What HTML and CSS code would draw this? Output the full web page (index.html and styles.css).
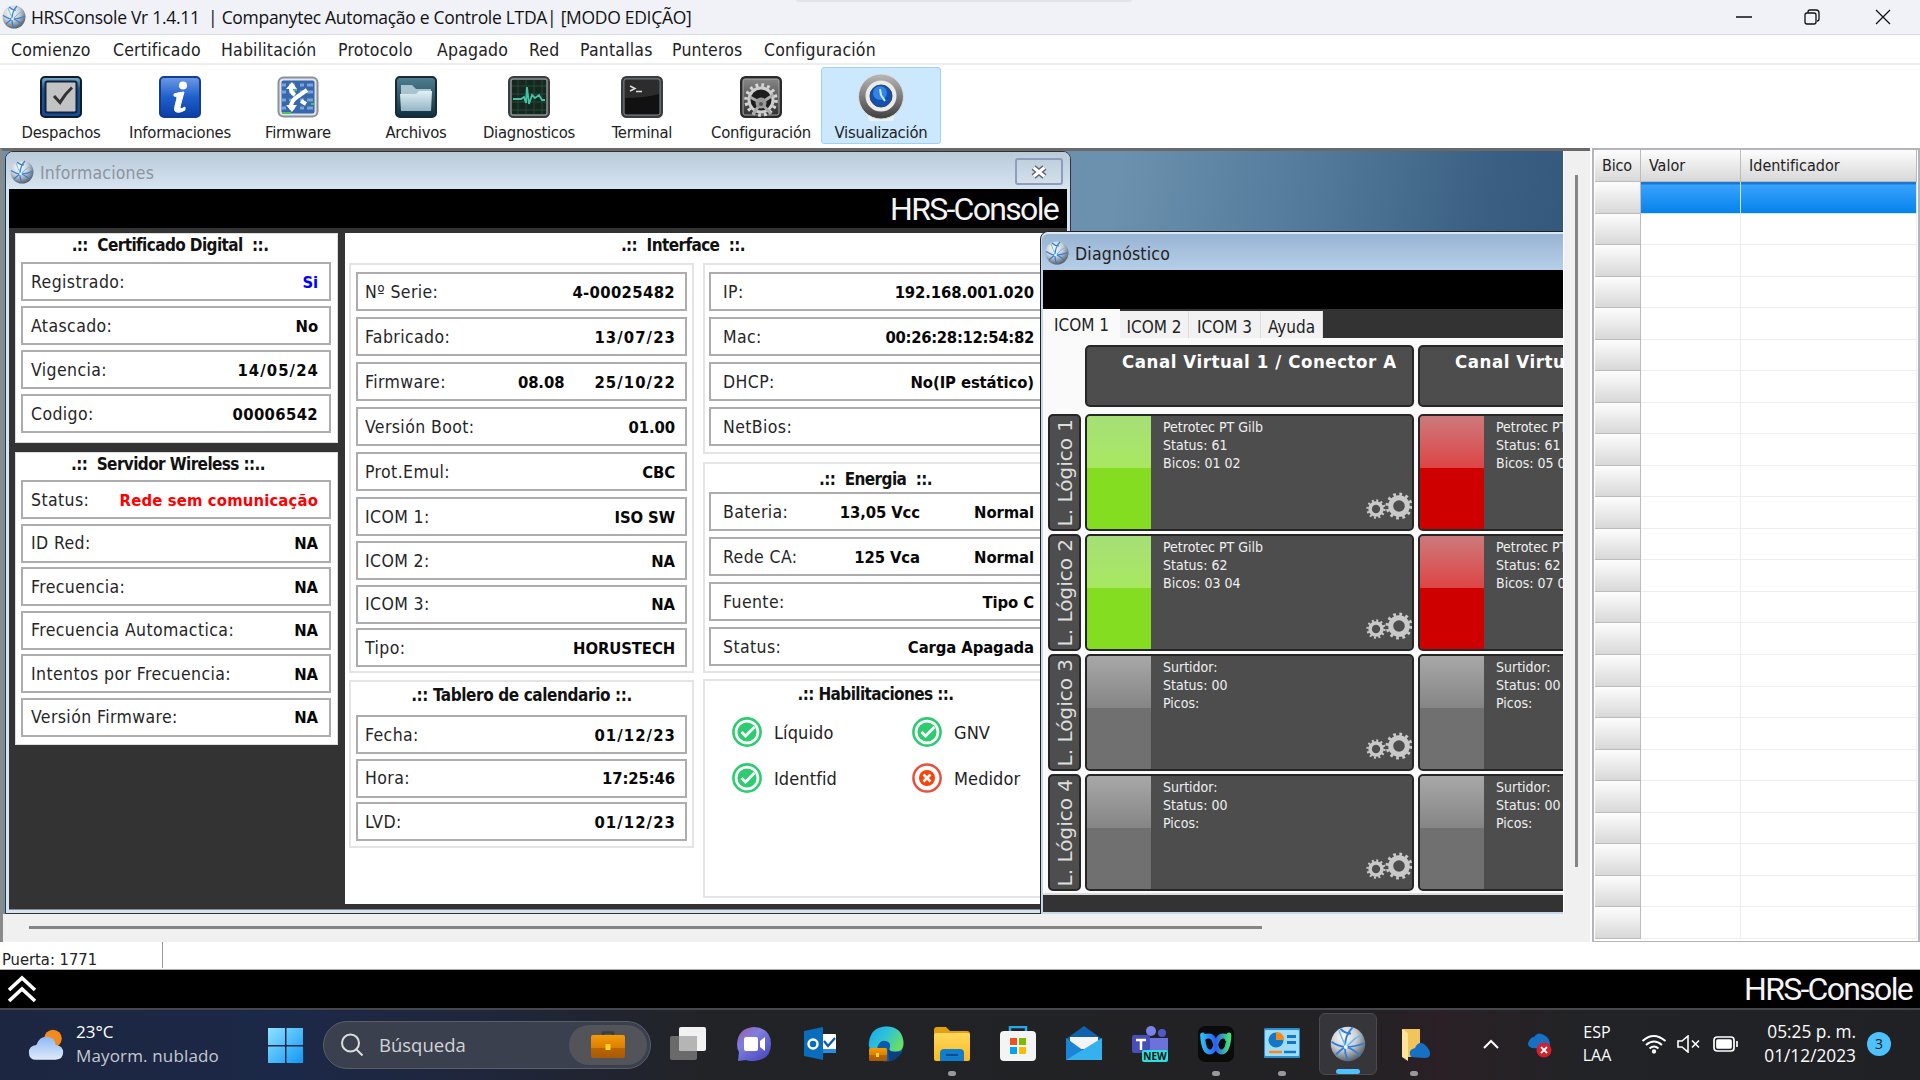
FILE: index.html
```html
<!DOCTYPE html>
<html lang="es">
<head>
<meta charset="utf-8">
<title>HRSConsole</title>
<link rel="stylesheet" href="styles.css">
</head>
<body>
<svg class="defs" width="0" height="0" aria-hidden="true">
  <defs>
    <radialGradient id="gGlobe" cx=".38" cy=".3" r=".75"><stop offset="0" stop-color="#fff"/><stop offset=".5" stop-color="#c9ced3"/><stop offset="1" stop-color="#4d555e"/></radialGradient>
    <linearGradient id="gInfo" x2="0" y2="1"><stop offset="0" stop-color="#6f9be6"/><stop offset=".5" stop-color="#1f5fcb"/><stop offset="1" stop-color="#0c3fa5"/></linearGradient>
    <linearGradient id="gDesk" x2="0" y2="1"><stop offset="0" stop-color="#79b3c9"/><stop offset=".3" stop-color="#1d5488"/><stop offset="1" stop-color="#164b9b"/></linearGradient>
    <linearGradient id="gFile" x2="0" y2="1"><stop offset="0" stop-color="#4f7f92"/><stop offset="1" stop-color="#0f2f3e"/></linearGradient>
    <linearGradient id="gFold" x2="0" y2="1"><stop offset="0" stop-color="#e3f1f6"/><stop offset="1" stop-color="#93b4c3"/></linearGradient>
    <linearGradient id="gGray" x2="0" y2="1"><stop offset="0" stop-color="#8a8a8a"/><stop offset="1" stop-color="#2d2d2d"/></linearGradient>
    <linearGradient id="gRing" x2="0" y2="1"><stop offset="0" stop-color="#b8b8b8"/><stop offset=".55" stop-color="#777"/><stop offset="1" stop-color="#3d3f3d"/></linearGradient>
    <linearGradient id="gWin" x2="1" y2="1"><stop offset="0" stop-color="#8fe2ff"/><stop offset="1" stop-color="#0f97f5"/></linearGradient>
    <linearGradient id="gCase" x2="0" y2="1"><stop offset="0" stop-color="#f79a06"/><stop offset=".55" stop-color="#d97f04"/><stop offset=".56" stop-color="#b96503"/><stop offset="1" stop-color="#a85a04"/></linearGradient>
    <linearGradient id="gChat" x2=".8" y2="1"><stop offset="0" stop-color="#9a5a9f"/><stop offset=".4" stop-color="#7f7fe0"/><stop offset="1" stop-color="#4a4ac0"/></linearGradient>
    <linearGradient id="gEdge" x2="1" y2=".6"><stop offset="0" stop-color="#1aa7e8"/><stop offset=".5" stop-color="#2fc3d8"/><stop offset="1" stop-color="#6ee05a"/></linearGradient>
    <linearGradient id="gYellow" x2="0" y2="1"><stop offset="0" stop-color="#ffd75e"/><stop offset="1" stop-color="#f9bb1e"/></linearGradient>
    <linearGradient id="gCloud" x2="0" y2="1"><stop offset="0" stop-color="#8db8f5"/><stop offset="1" stop-color="#dfeafa"/></linearGradient>
    <linearGradient id="gWebex" x2="1"><stop offset="0" stop-color="#2bb8f5"/><stop offset=".5" stop-color="#2f5cf5"/><stop offset="1" stop-color="#3fe07a"/></linearGradient>
  </defs>
  <symbol id="globe" viewBox="0 0 24 24">
    <circle cx="12" cy="12" r="11.500" fill="url(#gGlobe)"/>
    <path d="M1 10.500q5 3.500 10 3.500t12-2.500M15 1q-5 5-5 13t3 9M7 2q3 3 7 3M4 19q3-3 6-5M11 14q6 2 9 6" fill="none" stroke="#2f7fd8" stroke-width="1.200"/>
    <path d="M6 3q2 6 5 11M21 6q-5 2-10 8" fill="none" stroke="#6ab8f5" stroke-width="1"/>
    <circle cx="10.500" cy="14" r="1.300" fill="#e9f6ff"/>
  </symbol>
  <symbol id="cog" viewBox="-14 -14 28 28">
    <circle r="8.300" fill="none" stroke="#c9c9c9" stroke-width="5"/>
    <circle r="11.800" fill="none" stroke="#c9c9c9" stroke-width="3.400" stroke-dasharray="2.700 3.480"/>
  </symbol>
  <symbol id="ok" viewBox="0 0 30 30">
    <circle cx="15" cy="15" r="13.600" fill="#fff" stroke="#2ecc71" stroke-width="2.600"/>
    <circle cx="15" cy="15" r="9.600" fill="#2ecc71"/>
    <path d="M9.500 15l4 4 9-9" fill="none" stroke="#fff" stroke-width="2.800"/>
  </symbol>
  <symbol id="bad" viewBox="0 0 30 30">
    <circle cx="15" cy="15" r="13.600" fill="#fff" stroke="#e8503e" stroke-width="2.500"/>
    <circle cx="15" cy="15" r="8" fill="#fb4208"/>
    <path d="M11.500 11.500l7 7m0-7l-7 7" stroke="#fff" stroke-width="2.600"/>
  </symbol>
</svg>

<header class="titlebar">
  <svg class="globe24"><use href="#globe"/></svg>
  <span class="app-title">HRSConsole Vr 1.4.11 &nbsp;| Companytec Automação e Controle LTDA| [MODO EDIÇÃO]</span>
  <div class="peek"></div>
  <svg class="winctl" width="170" height="24" viewBox="0 0 170 24" fill="none" stroke="#111" stroke-width="1.300">
    <path d="M8 12h16M148 5l14 14m0-14l-14 14"/>
    <rect x="77" y="8" width="11" height="11" rx="2"/><path d="M80 8v-1q0-2 2-2h6q3 0 3 3v6q0 2-2 2"/>
  </svg>
</header>

<nav class="menu"><span>Comienzo</span><span>Certificado</span><span>Habilitación</span><span>Protocolo</span><span>Apagado</span><span>Red</span><span>Pantallas</span><span>Punteros</span><span>Configuración</span></nav>

<div class="toolbar">
  <div class="tool"><svg viewBox="0 0 42 42"><rect x="1" y="1" width="40" height="40" rx="4" fill="url(#gDesk)" stroke="#0e1c2c" stroke-width="2"/><rect x="5.500" y="5.500" width="31" height="31" rx="2" fill="#c3c3c3" stroke="#12233f" stroke-width="2"/><path d="M14 20l6 6.500Q25 18 32 11.500" fill="none" stroke="#333" stroke-width="3"/></svg><span>Despachos</span></div>
  <div class="tool"><svg viewBox="0 0 42 42"><rect x="1" y="1" width="40" height="40" rx="4" fill="url(#gInfo)" stroke="#123f96" stroke-width="2"/><circle cx="24" cy="9.500" r="4" fill="#fff"/><path d="M15 18q6-2 10-2l-4 15q0 3 5 0v3q-7 4-10 1-1-1 0-5l2-8q0-2-3-2z" fill="#fff" stroke="#fff"/></svg><span>Informaciones</span></div>
  <div class="tool"><svg viewBox="0 0 42 42"><rect x="1.500" y="1.500" width="39" height="39" rx="5" fill="#e0e4ea" stroke="#8b9098" stroke-width="2"/><rect x="4.500" y="4.500" width="33" height="33" rx="2" fill="#3767ad"/><path d="M5 9h32M5 16h32M5 24h32M5 32h32" stroke="#7ca4d6" stroke-width="3" stroke-dasharray="4 3 6 5"/><path d="M5 37h9M34 28h4M17 14h3" stroke="#4ec55c" stroke-width="2"/><path d="M14 10q-1 6 4 9M24 25l5 3M30 14l-10 7q-6 4-6 10" fill="none" stroke="#fff" stroke-width="4"/><path d="M9 13l6-7 5 7zM9 29l6 7 5-7z" fill="#fff"/></svg><span>Firmware</span></div>
  <div class="tool"><svg viewBox="0 0 42 42"><rect x="1" y="1" width="40" height="40" rx="4" fill="url(#gFile)" stroke="#182b34" stroke-width="2"/><path d="M6 9h11l4 4h15v18h-30z" fill="#a9c3cf"/><path d="M5 18h16l3-3h13l-1 20h-30z" fill="url(#gFold)"/></svg><span>Archivos</span></div>
  <div class="tool"><svg viewBox="0 0 42 42"><rect x="1.500" y="1.500" width="39" height="39" rx="4" fill="#15281f" stroke="#3a3d3f" stroke-width="3"/><rect x="3" y="3" width="36" height="36" rx="2" fill="none" stroke="#8d9294" stroke-width="1.500"/><path d="M10 4v34M18 4v34M26 4v34M34 4v34M4 10h34M4 18h34M4 26h34M4 34h34" stroke="#2a4638"/><path d="M5 23h8l3-2 2 6 1-16 2 17 3-9 3 3 4-3 3 5h3" fill="none" stroke="#41c2a4" stroke-width="1.800"/></svg><span>Diagnosticos</span></div>
  <div class="tool"><svg viewBox="0 0 42 42"><rect x="1.500" y="1.500" width="39" height="39" rx="4" fill="#111" stroke="#3a3d40" stroke-width="3"/><rect x="3" y="3" width="36" height="36" rx="2" fill="none" stroke="#8a9096"/><path d="M4 4h34v14q-14 4-34 4z" fill="#2c2c2c"/><path d="M9 10l5 2.500-5 2.500M15 15.500h6" fill="none" stroke="#ddd" stroke-width="1.500"/></svg><span>Terminal</span></div>
  <div class="tool"><svg viewBox="0 0 42 42"><rect x="1.500" y="1.500" width="39" height="39" rx="4" fill="url(#gGray)" stroke="#2b2b2b" stroke-width="3"/><rect x="3" y="3" width="36" height="36" rx="2" fill="none" stroke="#aaa"/><circle cx="21" cy="24" r="12" fill="#1d1d1d" stroke="#cfcfcf" stroke-width="3"/><circle cx="21" cy="24" r="15" fill="none" stroke="#d6d6d6" stroke-width="3.500" stroke-dasharray="2.800 3.080"/><path d="M21 27L10 21M21 27l12-8M21 27l10 11M21 27l-8 11" stroke="#aaa" stroke-width="3"/><circle cx="21" cy="27" r="5.500" fill="#999"/><circle cx="21" cy="28" r="2" fill="#555"/></svg><span>Configuración</span></div>
  <div class="tool active"><svg class="big" viewBox="0 0 48 48"><path d="M10 40h28l-2 8h-24z" fill="#eef2f5"/><circle cx="24" cy="23.500" r="22.500" fill="url(#gRing)" stroke="#ddd"/><circle cx="24" cy="23" r="15.500" fill="#ebebeb"/><circle cx="24" cy="23" r="11" fill="#1450ad" stroke="#254468"/><circle cx="23" cy="20" r="7" fill="#3183e6"/><path d="M23 16l1 6 4 6" fill="none" stroke="#cce8ff" stroke-width="2"/></svg><span>Visualización</span></div>
</div>

<main class="work">
  <section class="mdi">
    <div class="canvas">
      <div class="win info">
        <div class="wtitle"><svg class="globe24"><use href="#globe"/></svg><span>Informaciones</span>
          <div class="closebtn"><svg width="20" height="16" viewBox="0 0 20 16"><path d="M4.500 3.500l11 9m0-9l-11 9" stroke="#5b6275" stroke-width="6"/><path d="M4.500 3.500l11 9m0-9l-11 9" stroke="#fff" stroke-width="3"/></svg></div>
        </div>
        <div class="band"><span class="logo">HRS-Console</span></div>
        <div class="wbody">
          <div class="left">
            <div class="card cert">
              <h3>.:: &nbsp;Certificado Digital &nbsp;::.</h3>
              <div class="rows g5">
                <div class="row"><span>Registrado:</span><b class="blue">Si</b></div>
                <div class="row"><span>Atascado:</span><b>No</b></div>
                <div class="row"><span>Vigencia:</span><b class="date">14/05/24</b></div>
                <div class="row"><span>Codigo:</span><b class="num">00006542</b></div>
              </div>
            </div>
            <div class="card serv">
              <h3>.:: &nbsp;Servidor Wireless ::..</h3>
              <div class="rows g45">
                <div class="row"><span>Status:</span><b class="red">Rede sem comunicação</b></div>
                <div class="row"><span>ID Red:</span><b>NA</b></div>
                <div class="row"><span>Frecuencia:</span><b>NA</b></div>
                <div class="row"><span>Frecuencia Automactica:</span><b>NA</b></div>
                <div class="row"><span>Intentos por Frecuencia:</span><b>NA</b></div>
                <div class="row"><span>Versión Firmware:</span><b>NA</b></div>
              </div>
            </div>
          </div>
          <div class="iface">
            <h3>.:: &nbsp;Interface &nbsp;::.</h3>
            <div class="cols">
              <div class="colA">
                <div class="sub s1">
                  <div class="rows g6">
                    <div class="row"><span>Nº Serie:</span><b class="num">4-00025482</b></div>
                    <div class="row"><span>Fabricado:</span><b class="date">13/07/23</b></div>
                    <div class="row"><span>Firmware:</span><b class="mid">08.08</b><b class="date">25/10/22</b></div>
                    <div class="row"><span>Versión Boot:</span><b>01.00</b></div>
                    <div class="row"><span>Prot.Emul:</span><b>CBC</b></div>
                    <div class="row"><span>ICOM 1:</span><b>ISO SW</b></div>
                  </div>
                  <div class="rows g45 more">
                    <div class="row"><span>ICOM 2:</span><b>NA</b></div>
                    <div class="row"><span>ICOM 3:</span><b>NA</b></div>
                    <div class="row"><span>Tipo:</span><b>HORUSTECH</b></div>
                  </div>
                </div>
                <div class="sub s2">
                  <h3>.:: Tablero de calendario ::.</h3>
                  <div class="rows g45">
                    <div class="row"><span>Fecha:</span><b class="date">01/12/23</b></div>
                    <div class="row"><span>Hora:</span><b>17:25:46</b></div>
                    <div class="row"><span>LVD:</span><b class="date">01/12/23</b></div>
                  </div>
                </div>
              </div>
              <div class="colB">
                <div class="sub s3">
                  <div class="rows g6">
                    <div class="row"><span>IP:</span><b>192.168.001.020</b></div>
                    <div class="row"><span>Mac:</span><b class="mac">00:26:28:12:54:82</b></div>
                    <div class="row"><span>DHCP:</span><b>No(IP estático)</b></div>
                    <div class="row"><span>NetBios:</span></div>
                  </div>
                </div>
                <div class="sub s4">
                  <h3>.:: &nbsp;Energia &nbsp;::.</h3>
                  <div class="rows g6">
                    <div class="row"><span>Bateria:</span><b class="volt">13,05 Vcc</b><b>Normal</b></div>
                    <div class="row"><span>Rede CA:</span><b class="volt">125 Vca</b><b>Normal</b></div>
                    <div class="row"><span>Fuente:</span><b>Tipo C</b></div>
                    <div class="row"><span>Status:</span><b>Carga Apagada</b></div>
                  </div>
                </div>
                <div class="sub s5">
                  <h3>.:: Habilitaciones ::.</h3>
                  <div class="flags">
                    <div><svg><use href="#ok"/></svg>Líquido</div><div><svg><use href="#ok"/></svg>GNV</div>
                    <div><svg><use href="#ok"/></svg>Identfid</div><div><svg><use href="#bad"/></svg>Medidor</div>
                  </div>
                </div>
              </div>
            </div>
          </div>
        </div>
      </div>

      <div class="win diag">
        <div class="wtitle"><svg class="globe24"><use href="#globe"/></svg><span>Diagnóstico</span></div>
        <div class="band"></div>
        <div class="tabs"><span class="on">ICOM 1</span><span>ICOM 2</span><span>ICOM 3</span><span>Ayuda</span></div>
        <div class="board">
          <div></div><div class="chan">Canal Virtual 1 / Conector A</div><div class="chan">Canal Virtual 2 / Conector B</div>
          <div class="log"><span>L. Lógico 1</span></div>
          <div class="cell green"><i></i><p>Petrotec PT Gilb<br>Status: 61<br>Bicos: 01 02</p><svg class="c1"><use href="#cog"/></svg><svg class="c2"><use href="#cog"/></svg></div>
          <div class="cell redc"><i></i><p>Petrotec PT Gilb<br>Status: 61<br>Bicos: 05 06</p></div>
          <div class="log"><span>L. Lógico 2</span></div>
          <div class="cell green"><i></i><p>Petrotec PT Gilb<br>Status: 62<br>Bicos: 03 04</p><svg class="c1"><use href="#cog"/></svg><svg class="c2"><use href="#cog"/></svg></div>
          <div class="cell redc"><i></i><p>Petrotec PT Gilb<br>Status: 62<br>Bicos: 07 08</p></div>
          <div class="log"><span>L. Lógico 3</span></div>
          <div class="cell"><i></i><p>Surtidor:<br>Status: 00<br>Picos:</p><svg class="c1"><use href="#cog"/></svg><svg class="c2"><use href="#cog"/></svg></div>
          <div class="cell"><i></i><p>Surtidor:<br>Status: 00<br>Picos:</p></div>
          <div class="log"><span>L. Lógico 4</span></div>
          <div class="cell"><i></i><p>Surtidor:<br>Status: 00<br>Picos:</p><svg class="c1"><use href="#cog"/></svg><svg class="c2"><use href="#cog"/></svg></div>
          <div class="cell"><i></i><p>Surtidor:<br>Status: 00<br>Picos:</p></div>
        </div>
      </div>
    </div>
    <div class="vscroll"><div></div></div>
    <div class="hscroll"><div></div></div>
  </section>

  <aside class="grid">
    <div class="gr head"><span>Bico</span><span>Valor</span><span>Identificador</span></div>
    <div class="gr sel"><i></i><i></i><i></i></div>
    <div class="gr"><i></i><i></i><i></i></div><div class="gr"><i></i><i></i><i></i></div><div class="gr"><i></i><i></i><i></i></div><div class="gr"><i></i><i></i><i></i></div>
    <div class="gr"><i></i><i></i><i></i></div><div class="gr"><i></i><i></i><i></i></div><div class="gr"><i></i><i></i><i></i></div><div class="gr"><i></i><i></i><i></i></div>
    <div class="gr"><i></i><i></i><i></i></div><div class="gr"><i></i><i></i><i></i></div><div class="gr"><i></i><i></i><i></i></div><div class="gr"><i></i><i></i><i></i></div>
    <div class="gr"><i></i><i></i><i></i></div><div class="gr"><i></i><i></i><i></i></div><div class="gr"><i></i><i></i><i></i></div><div class="gr"><i></i><i></i><i></i></div>
    <div class="gr"><i></i><i></i><i></i></div><div class="gr"><i></i><i></i><i></i></div><div class="gr"><i></i><i></i><i></i></div><div class="gr"><i></i><i></i><i></i></div>
    <div class="gr"><i></i><i></i><i></i></div><div class="gr"><i></i><i></i><i></i></div><div class="gr"><i></i><i></i><i></i></div>
  </aside>
</main>

<div class="status"><span>Puerta: 1771</span></div>
<div class="footer"><svg width="30" height="28" viewBox="0 0 30 28" fill="none" stroke="#fff" stroke-width="3.600"><path d="M2 15L15 3l13 12M2 26L15 14l13 12"/></svg><span class="logo">HRS-Console</span></div>

<div class="taskbar">
  <svg class="weather" viewBox="0 0 40 34"><circle cx="27" cy="10" r="9.500" fill="#f38a1c"/><path d="M9 33q-8 0-8-8 0-7 8-8 3-9 11-9 9 0 10 9 8 1 8 8t-8 8z" fill="url(#gCloud)"/></svg>
  <div class="wtext"><span>23°C</span><span class="dim">Mayorm. nublado</span></div>
  <svg class="start" viewBox="0 0 35 35"><path d="M0 0h17v17h-17zM18.500 0h16.500v17h-16.500zM0 18.500h17v16.500h-17zM18.500 18.500h16.500v16.500h-16.500z" fill="url(#gWin)"/></svg>
  <div class="search">
    <svg width="26" height="26" viewBox="0 0 26 26" fill="none" stroke="#ddd" stroke-width="2"><circle cx="11.500" cy="11" r="8.500"/><path d="M17.500 17.500l6 6"/></svg>
    <span>Búsqueda</span>
    <div class="pill"><svg width="34" height="28" viewBox="0 0 34 28"><path d="M12 5v-3.500h10v3.500" fill="none" stroke="#3b3b3b" stroke-width="2.500"/><rect y="4" width="34" height="23" rx="2" fill="url(#gCase)"/><rect x="14.500" y="13" width="5" height="6" fill="#ffd51a"/></svg></div>
  </div>
  <div class="apps">
    <div><svg viewBox="0 0 36 36"><rect x="0" y="10" width="27" height="24" rx="2" fill="#6a6a6a"/><rect x="9" y="1" width="27" height="24" rx="2" fill="#f2f2f2"/><path d="M9 10h18v15h-16q-2 0-2-2z" fill="#b5b5b5"/></svg></div>
    <div><svg viewBox="0 0 36 36"><path d="M18 1q17 1 17 17t-17 17q-6 0-8-1l-8 1 1-9q-2-3-2-8 1-16 17-17z" fill="url(#gChat)"/><rect x="8" y="11" width="14" height="14" rx="2" fill="#fff"/><path d="M24 15l5-4v14l-5-4z" fill="#fff"/></svg></div>
    <div><svg viewBox="0 0 36 36"><rect x="16" y="8" width="18" height="19" rx="1" fill="#fff"/><path d="M16 18l18-9v18h-18z" fill="#2a8ddc"/><path d="M20 9h14v14h-14z" fill="#fff"/><path d="M22 15l4 5 7-8" fill="none" stroke="#0b5ca8" stroke-width="2.200"/><path d="M2 5l19-4v33l-19-4z" fill="#0a6cbd"/><circle cx="11" cy="18" r="4.500" fill="none" stroke="#fff" stroke-width="2.500"/></svg></div>
    <div><svg viewBox="0 0 36 36"><circle cx="18" cy="18" r="17.500" fill="#0c5aa8"/><path d="M1 20q0-19 17-19.500 17 0 17.500 17 0 8-8 8-7 0-6-3 2-5-2-7-7-3-10 5-1 4 1 8-7-1-9.500-8.500z" fill="url(#gEdge)"/><path d="M20 22q1 5 9 4l5 0q-6 9-13 9z" fill="#0b3f7e"/><rect x="1" y="22" width="18" height="13" rx="1.500" fill="url(#gCase)"/><rect x="8" y="27" width="3" height="4" fill="#ffd51a"/></svg></div>
    <div class="run"><svg viewBox="0 0 36 36"><path d="M0 4q0-3 3-3h9l4 4h17q3 0 3 3v4h-36z" fill="#e0a010"/><rect y="7" width="36" height="28" rx="2" fill="url(#gYellow)"/><path d="M6 35v-8q0-4 4-4h16q4 0 4 4v8z" fill="#127dcc"/><path d="M12 29h12" stroke="#0a4c8c" stroke-width="2"/></svg></div>
    <div><svg viewBox="0 0 36 36"><path d="M10 7v-6h16v6" fill="none" stroke="#24a8e6" stroke-width="2.500"/><rect y="5" width="36" height="30" rx="4" fill="#f4f4f4"/><path d="M10 12h7v7h-7z" fill="#f05022"/><path d="M19 12h7v7h-7z" fill="#7fba00"/><path d="M10 21h7v7h-7z" fill="#00a4ef"/><path d="M19 21h7v7h-7z" fill="#fb0"/></svg></div>
    <div><svg viewBox="0 0 36 36"><path d="M0 13l18-13 18 13v21h-36z" fill="#0e62ae"/><path d="M4 11h28v12h-28z" fill="#f4f4f4"/><path d="M0 12l18 13-18 9z" fill="#1b84d6"/><path d="M36 12v22h-36z" fill="#35b2ee"/></svg></div>
    <div><svg viewBox="0 0 36 36"><circle cx="19" cy="5" r="5" fill="#7b83eb"/><circle cx="30" cy="7" r="4" fill="#5059c9"/><path d="M12 12h24v12q0 5-6 5h-18z" fill="#6b72dc"/><rect x="0" y="9" width="18" height="18" rx="2" fill="#464eb8"/><path d="M4 14h10M9 14v10" stroke="#fff" stroke-width="2.500"/><rect x="10" y="24" width="26" height="12" rx="2" fill="#2de0e0"/><text x="23" y="33.800" class="newtag">NEW</text></svg></div>
    <div class="run"><svg viewBox="0 0 36 36"><rect width="36" height="36" rx="7" fill="#0b0b0b"/><path d="M4.500 9q1 17 7.500 17 4 0 6-8t7-8q4 0 4 3M31 9q-1 17-7.500 17-4 0-6-8t-6.500-8q-4 0-5 2" fill="none" stroke="url(#gWebex)" stroke-width="4.800" stroke-linecap="round"/></svg></div>
    <div class="run"><svg viewBox="0 0 36 36"><rect y="3" width="36" height="28" rx="2" fill="#9fdcf8" stroke="#2a8fd0" stroke-width="2"/><circle cx="12" cy="14" r="7.500" fill="#1278c6"/><path d="M12 14v-8q8 0 8 8z" fill="#f7891c"/><path d="M23 9h9v3h-9zM23 15h9v3h-9z" fill="#1278c6"/><path d="M5 26h13" stroke="#f7891c" stroke-width="2.500"/><path d="M20 26h12" stroke="#1278c6" stroke-width="2.500"/></svg></div>
    <div class="run cur"><svg><use href="#globe"/></svg></div>
    <div class="run"><svg viewBox="0 0 36 36"><path d="M6 3h18v28h-18z" fill="#f2c55c"/><path d="M6 3l6 4v28l-6-4z" fill="#ffe39a"/><path d="M15 31q-4-7 4-9 3-7 9-4 7 6 6 11-1 3-5 3z" fill="#1671c4"/></svg></div>
  </div>
  <div class="tray">
    <svg width="16" height="10" viewBox="0 0 16 10" fill="none" stroke="#fff" stroke-width="2"><path d="M1 9l7-7 7 7"/></svg>
    <svg width="26" height="28" viewBox="0 0 26 28"><path d="M5 18q-6-2-3-7 2-4 5-4 4-6 10-2 6 3 6 10l-4 4z" fill="#1671c4"/><circle cx="17" cy="20" r="7.500" fill="#d3202e"/><path d="M14 17l6 6m0-6l-6 6" stroke="#fff" stroke-width="1.800"/></svg>
    <div class="lang">ESP<br>LAA</div>
    <svg width="26" height="20" viewBox="0 0 26 20" fill="none" stroke="#fff" stroke-width="1.900"><path d="M1.500 7q11-10 23 0M5 11q8-7 16 0M8.500 14.500q4.500-4 9 0"/><circle cx="13" cy="17.500" r="1.200"/></svg>
    <svg width="24" height="18" viewBox="0 0 24 18" fill="none" stroke="#fff" stroke-width="1.600"><path d="M1 6h4l6-5v16l-6-5h-4zM15 5.500l7 7m0-7l-7 7"/></svg>
    <svg width="26" height="16" viewBox="0 0 26 16" fill="none" stroke="#fff" stroke-width="1.700"><rect x="1" y="1" width="20" height="14" rx="3"/><path d="M24 5v6"/><rect x="4" y="4" width="14" height="8" rx="1" fill="#fff"/></svg>
    <div class="clock">05:25 p. m.<br>01/12/2023</div>
    <div class="badge">3</div>
  </div>
</div>
</body>
</html>
```
FILE: styles.css
```css
* { box-sizing: border-box; }
html, body { margin: 0; height: 1080px; overflow: hidden; }
body {
  width: 1920px; display: flex; flex-direction: column; background: #fff; color: #222;
  font: 17px/20px "DejaVu Sans Condensed", "DejaVu Sans", sans-serif; font-stretch: condensed;
  white-space: nowrap;
}
.defs { position: absolute; }
svg { display: block; flex: none; }
h3 { margin: 0; font-size: 17px; line-height: 20px; text-align: center; color: #111; letter-spacing: -.6px; }
.globe24 { width: 24px; height: 24px; }

.titlebar { position: relative; height: 35px; background: #f0f2f7; display: flex; align-items: center; padding: 0 22px 0 2px; border-bottom: 1px solid #ddd; }
.app-title { flex: 1; margin-left: 5px; font: 17.500px/24px "Open Sans", "Noto Sans", sans-serif; font-stretch: normal; color: #111; letter-spacing: -.3px; }
.peek { position: absolute; left: 796px; top: 0; width: 336px; height: 2px; background: #e2e3e7; border-radius: 0 0 8px 8px; }

.menu { height: 30px; display: grid; grid-template-columns: 102px 108px 117px 99px 92px 51px 92px 92px 130px; padding: 2px 0 0 11px; align-items: center; border-bottom: 2px solid #eee; font-size: 17.500px; letter-spacing: .2px; }

.toolbar { height: 83px; display: grid; grid-template-columns: 120px 118px 118px 118px 108px 118px 120px 120px; padding: 2px 0 0 1px; font-size: 16.500px; letter-spacing: -.25px; }
.tool { height: 77px; display: flex; flex-direction: column; align-items: center; padding-top: 8px; border: 1px solid transparent; }
.tool svg { width: 42px; height: 42px; }
.tool span { margin-top: 5px; }
.tool.active { background: #cce8ff; border-color: #99d1ff; border-radius: 3px; }
.tool .big { width: 48px; height: 48px; margin: -3px 0; }

.work { height: 794px; display: flex; }
.mdi { width: 1590px; display: grid; grid-template: 763px 28px / 1561px 26px; border-top: 3px solid #696969; border-left: 3px solid #8a8a8a; background: #f0f0f0; }
.canvas { position: relative; overflow: hidden; background: linear-gradient(100deg, #6b91ae 66%, #52799a 78%, #3a5f82 88%, #2b5072); border-right: 1px solid #fff; }
.vscroll { padding: 24px 0 0 11px; }
.vscroll div { width: 3px; height: 692px; background: #858585; }
.hscroll { padding: 12px 0 0 26px; }
.hscroll div { width: 1233px; height: 3px; background: #858585; }

.win { position: absolute; border: 1px solid #333; border-radius: 8px 8px 0 0; }
.wtitle { display: flex; align-items: center; }
.info { left: 2px; top: 0; width: 1066px; height: 763px; background: #d6e3f0; padding: 0 3px; }
.info .wtitle { height: 37px; padding: 3px 7px 0 4px; background: linear-gradient(#b9cad9, #d7e4f1); color: #8d949b; margin: 0 -3px; border-radius: 7px 7px 0 0; }
.wtitle span { margin: 2px 0 0 6px; font-size: 17.500px; letter-spacing: .2px; }
.closebtn { margin-left: auto; width: 48px; height: 27px; border: 2px solid #8d9dbb; border-radius: 3px; display: grid; place-items: center; margin-top: -1px; }
.band { height: 39px; background: #000; display: flex; align-items: center; justify-content: flex-end; padding-right: 9px; }
.logo { font: 400 32px/38px Roboto, sans-serif; font-stretch: normal; color: #f4f4f4; letter-spacing: -1.700px; }
.wbody { background: #333; height: 682px; padding: 5px 0 5px 6px; display: flex; gap: 7px; border-bottom: 1px solid #889; }
.left { flex: none; width: 323px; display: flex; flex-direction: column; gap: 9px; }
.card { background: #fff; border: 1px solid #ddd; padding: 1px 6px 0 5px; }
.cert { height: 210px; }
.serv { height: 293px; }
.cert .rows { margin-top: 7px; }
.serv .rows { margin-top: 6px; }
.cert h3 { padding-right: 12px; } .serv h3 { padding-right: 16px; }
.rows { display: flex; flex-direction: column; }
.g5 { gap: 5px; } .g45 { gap: 4.500px; } .g6 { gap: 6px; }
.row { height: 39px; flex: none; background: #fff; border: 2px solid #adadad; display: flex; align-items: center; justify-content: space-between; padding: 0 11px 0 8px; }
.row span { color: #262626; font-size: 17.500px; letter-spacing: .4px; }
.row b { color: #080808; letter-spacing: -.1px; font-size: 16.500px; padding-top: 2px; }
.row b.blue { color: #00f; } .row b.red { color: #f00; letter-spacing: .15px; }
.row b.date { letter-spacing: 1.100px; margin-right: -1px; }
.row b.num { letter-spacing: .35px; }
.row b.mac { letter-spacing: -.3px; }
.row .mid { margin-left: auto; margin-right: 30px; }

.iface { flex: 1; min-width: 0; background: #fff; padding: 1px 4px 0; display: flex; flex-direction: column; }
.iface > h3 { margin: 1px 46px 8px 0; }
.cols { display: flex; gap: 9px; flex: 1; }
.colA { flex: none; width: 345px; }
.colB { flex: none; width: 361px; }
.sub { border: 2px solid #e4e4e4; padding: 0 5px; }
.s1 { height: 410px; padding-top: 7px; }
.s1 .more { margin-top: 5px; }
.s1 .row, .s2 .row { padding-left: 7px; padding-right: 10px; }
.s2 { height: 168px; margin-top: 7px; padding-top: 3px; }
.s2 h3 { letter-spacing: -.4px; }
.s2 .rows { margin-top: 10px; }
.s3 { height: 191px; padding-top: 7px; }
.s4 { height: 211px; margin-top: 8px; padding-top: 5px; }
.s4 .rows { margin-top: 3px; }
.colB .sub { padding-left: 4px; padding-right: 0; border-right: 0; }
.colB .row { padding-left: 12px; padding-right: 28px; }
.volt { margin-left: auto; width: 90px; text-align: right; }
.volt + b { width: 114px; text-align: right; }
.s4 h3, .s5 h3 { padding-right: 22px; }
.s5 { height: 219px; margin-top: 6px; padding-top: 3px; }
.flags { display: grid; grid-template: 46px 46px / 180px 160px; padding: 6px 0 0 23px; font-size: 18px; letter-spacing: .1px; }
.flags div { display: flex; align-items: center; gap: 12px; }
.flags svg { width: 30px; height: 30px; margin-top: -2px; }

.diag { left: 1037px; top: 80px; width: 620px; height: 700px; background: #c5d8ec; padding-left: 2px; border-color: #222; }
.diag .wtitle { height: 38px; padding: 1px 0 0 3px; background: linear-gradient(#98b4d3, #b6cee8); border-top: 2px solid #dbe7f3; margin-left: -1px; color: #222; border-radius: 7px 0 0 0; }
.tabs { height: 29px; background: #333; display: flex; align-items: flex-end; font-size: 17px; letter-spacing: 0; }
.tabs span { height: 27px; background: #f2f2f2; border-right: 1px solid #ddd; width: 72px; text-align: center; line-height: 33px; }
.tabs .on { width: 77px; height: 29px; background: #fafafa; line-height: 32px; border: 0; }
.tabs span:nth-child(2) { width: 69px; }
.tabs span:last-child { width: 62px; }
.board { height: 557px; background: #fafafa; display: grid; grid-template: 66px repeat(4, 117px) / 33px 329px 330px; column-gap: 4px; row-gap: 3px; padding: 7px 0 0 5px; overflow: hidden; border-bottom: 2px solid #ddd; }
.diag::after { content: ""; display: block; height: 17px; background: #333; }
.chan, .log, .cell { background: #4d4d4d; border: 2px solid #262626; border-radius: 5px; }
.chan { height: 62px; color: #fff; font-weight: bold; font-size: 18.500px; letter-spacing: .55px; padding: 4px 0 0 35px; line-height: 22px; }
.log { color: #ddd; display: grid; place-items: center; }
.log span { writing-mode: vertical-rl; transform: rotate(180deg); font: 20px/28px "DejaVu Sans", sans-serif; }
.cell { position: relative; display: flex; overflow: hidden; color: #f0f0f0; font-size: 14px; line-height: 18px; letter-spacing: 0; }
.cell i { width: 64px; background: linear-gradient(#a8a8a8, #858585 52px, #707070 52px); }
.green i { background: linear-gradient(#a6df78, #a8e860 52px, #84dd20 52px); }
.redc i { background: linear-gradient(#cc7a7d, #de4444 52px, #ce0000 52px); }
.cell p { margin: 2px 0 0 12px; }
.c1 { position: absolute; width: 20px; height: 22px; right: 26px; bottom: 9px; }
.c2 { position: absolute; width: 28px; height: 30px; right: -1px; bottom: 8px; }

.grid { flex: 1; margin-left: 2px; border: 2px solid #b4b4bc; border-bottom-width: 1px; padding: 0 1px 1px; background: #fff; font-size: 16px; letter-spacing: 0; }
.gr { display: grid; grid-template-columns: 46px 100px 1fr; height: 31.540px; }
.gr > * { border-right: 1px solid #eee; border-bottom: 1px solid #eee; }
.gr > :first-child, .head > * { background: linear-gradient(#fdfdfd, #d8d8d8); border-color: #bbb; }
.head span { padding: 6px 0 0 8px; }
.head span:first-child { padding-left: 7px; letter-spacing: -.2px; }
.head { height: 32px; }
.sel > :not(:first-child) { background: linear-gradient(#1878cf 2px, #39a2fc 3px, #0483ec); border-color: #cfe6fa; }

.status { height: 28px; border-bottom: 1px solid #aaa; background: #fff; font-size: 16.400px; }
.status span { display: block; width: 163px; height: 26px; border-right: 1px solid #999; padding: 8px 0 0 2px; }
.footer { height: 38px; background: #000; display: flex; align-items: center; justify-content: space-between; padding: 0 8px 0 7px; }

.taskbar { height: 72px; border-top: 2px solid #45474c; display: flex; align-items: center; background: linear-gradient(90deg, #1c2640 0, #1b2847 15%, #20263a 26%, #222326 37%, #222225 70%, #2a2026 75%, #222326 82%, #202124); color: #fff; font: 17px/24px "Open Sans", "Noto Sans", sans-serif; font-stretch: normal; }
.weather { width: 37px; height: 32px; margin-left: 28px; }
.wtext { width: 192px; margin-left: 11px; display: flex; flex-direction: column; margin-top: -3px; letter-spacing: 0; }
.dim { color: #c6c9d0; letter-spacing: .15px; }
.start { width: 35px; height: 35px; margin-right: 20px; }
.search { width: 328px; height: 48px; border-radius: 24px; background: #3b404e; border: 1px solid #5a5e68; display: flex; align-items: center; padding: 0 3px 0 15px; gap: 14px; color: #d2d3d7; font-size: 18.500px; letter-spacing: 0; }
.pill { margin-left: auto; width: 78px; height: 40px; border-radius: 20px; background: #52545a; display: grid; place-items: center; }
.apps { flex: none; display: flex; margin-left: 4px; width: 792px; height: 70px; }
.apps div { width: 66px; height: 62px; display: grid; place-items: center; position: relative; margin-top: 3px; }
.apps svg { width: 36px; height: 36px; }
.run::after { content: ""; position: absolute; bottom: -1px; left: 29px; width: 8px; height: 5px; border-radius: 3px; background: #999; }
.apps .cur { background: #35353a; border: 1px solid #4a4a4f; border-radius: 6px; width: 58px; margin-left: 4px; margin-right: 4px; }
.cur::after { left: 16px; bottom: 0; width: 24px; background: #4cc2ff; }
.newtag { font: bold 10px "Open Sans", sans-serif; text-anchor: middle; fill: #111; letter-spacing: 0; }
.tray { flex: 1; display: grid; grid-template-columns: 88px 10px 104px 10px 60px 14px 123px 46px; align-items: center; justify-items: center; margin-top: -2px; }
.lang { text-align: center; line-height: 23px; font-size: 16px; }
.clock { justify-self: end; text-align: right; font-size: 17.300px; }
.badge { width: 24px; height: 24px; border-radius: 12px; background: #4cc2ff; color: #111; font-size: 14px; text-align: center; }
```
